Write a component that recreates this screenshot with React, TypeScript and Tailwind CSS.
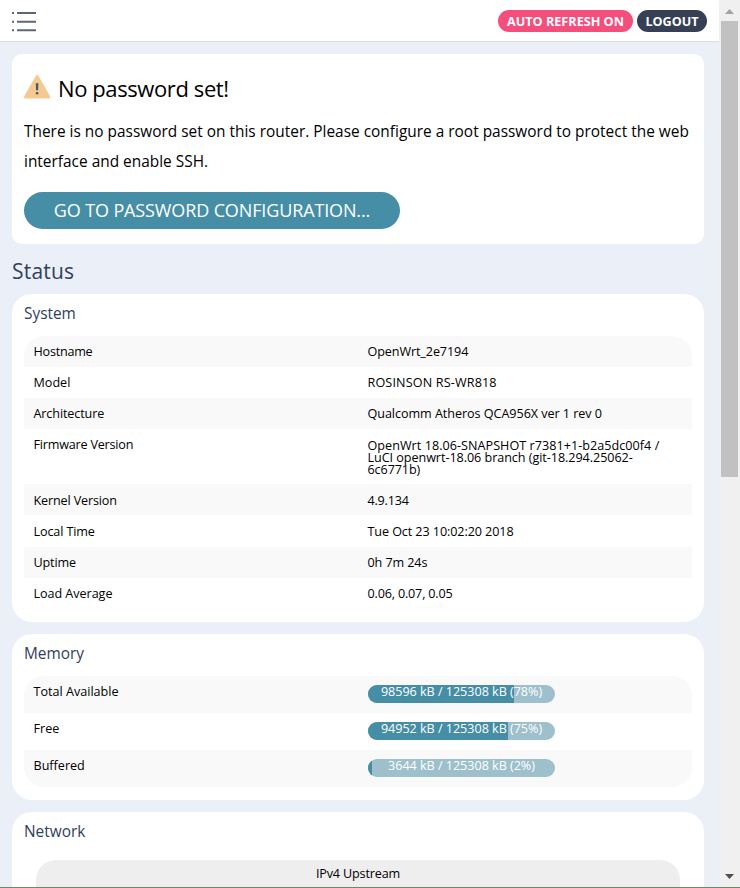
import type { ReactNode } from "react";

type Row = { label: string; value: ReactNode; height: string; labelClass: string; valueClass: string };

const systemRows: Row[] = [
  { label: "Hostname", value: "OpenWrt_2e7194", height: "h-[31px]", labelClass: "pt-[10px] tracking-[-0.23px]", valueClass: "pt-[10px] tracking-[-0.1px]" },
  { label: "Model", value: "ROSINSON RS-WR818", height: "h-[31px]", labelClass: "pt-[10px]", valueClass: "pt-[10px] tracking-[0.15px]" },
  { label: "Architecture", value: "Qualcomm Atheros QCA956X ver 1 rev 0", height: "h-[31px]", labelClass: "pt-[10px] tracking-[-0.12px]", valueClass: "pt-[10px] tracking-[-0.05px]" },
  {
    label: "Firmware Version",
    value: (
      <>
        <span className="tracking-[0.04px]">OpenWrt 18.06-SNAPSHOT r7381+1-b2a5dc00f4 /</span>
        <br />
        <span className="tracking-[-0.05px]">LuCI openwrt-18.06 branch (git-18.294.25062-</span>
        <br />
        <span className="tracking-[-0.1px]">6c6771b)</span>
      </>
    ),
    height: "h-[55px]",
    labelClass: "pt-[10px] tracking-[-0.2px]",
    valueClass: "pt-[11px]",
  },
  { label: "Kernel Version", value: "4.9.134", height: "h-[31px]", labelClass: "pt-[11px] tracking-[-0.15px]", valueClass: "pt-[11px] tracking-[-0.2px]" },
  { label: "Local Time", value: "Tue Oct 23 10:02:20 2018", height: "h-[32px]", labelClass: "pt-[11px] tracking-[-0.12px]", valueClass: "pt-[11px] tracking-[-0.09px]" },
  { label: "Uptime", value: "0h 7m 24s", height: "h-[31px]", labelClass: "pt-[10px] tracking-[-0.15px]", valueClass: "pt-[10px] tracking-[-0.1px]" },
  { label: "Load Average", value: "0.06, 0.07, 0.05", height: "h-[31px]", labelClass: "pt-[10px] tracking-[-0.05px]", valueClass: "pt-[10px] tracking-[-0.17px]" },
];

const memory = [
  { label: "Total Available", used: 98596, percent: 78 },
  { label: "Free", used: 94952, percent: 75 },
  { label: "Buffered", used: 3644, percent: 2 },
];
const totalMemory = 125308;

function Card({ title, height, children }: { title: string; height: string; children: ReactNode }) {
  return (
    <section className={`${height} shrink-0 rounded-[20px] bg-white px-3 pt-2`}>
      <h3 className="h-[34px] text-[15.4px] leading-6 text-[#32405d]">{title}</h3>
      {children}
    </section>
  );
}

function SystemTable() {
  return (
    <div className="overflow-hidden rounded-[20px]">
      {systemRows.map((row) => (
        <div key={row.label} className={`${row.height} grid grid-cols-2 text-[12.6px] leading-3 odd:bg-[#f9f9f9]`}>
          <div className={`${row.labelClass} pl-[9.5px]`}>{row.label}</div>
          <div className={`${row.valueClass} pl-[9.5px] whitespace-nowrap`}>{row.value}</div>
        </div>
      ))}
    </div>
  );
}

function MemoryTable() {
  return (
    <div className="overflow-hidden rounded-[20px]">
      {memory.map((row) => (
        <div key={row.label} className="grid h-[37px] grid-cols-2 text-[12.6px] leading-3 odd:bg-[#f9f9f9]">
          <div className="pt-[10px] pl-[9.5px]">{row.label}</div>
          <div className="pt-[9px] pl-[10px]">
            <div className="relative h-[18px] w-[187px]">
              <div className="h-full overflow-hidden rounded-[9px] bg-[#9dc0cc]">
                <div className="h-full bg-[#468ea5]" style={{ width: `${row.percent}%` }} />
              </div>
              <span className="absolute inset-x-0 top-[-2px] text-center leading-[18px] tracking-[-0.03px] whitespace-nowrap text-white">
                {`${row.used} kB / ${totalMemory} kB (${row.percent}%)`}
              </span>
            </div>
          </div>
        </div>
      ))}
    </div>
  );
}

function WarningIcon() {
  return (
    <svg width="27" height="26" viewBox="0 0 27 26" aria-hidden="true">
      <path d="M13.1 2.5 24.8 23H1.5Z" fill="#f5ca90" stroke="#f5ca90" strokeWidth="3" strokeLinejoin="round" />
      <path d="M11.8 9.2h2.6l-.3 7h-2Z" fill="#4b5568" />
      <circle cx="13.1" cy="19.3" r="1.3" fill="#4b5568" />
    </svg>
  );
}

function MenuIcon() {
  return (
    <svg width="24" height="22" viewBox="0 0 24 22" className="mt-[1px] text-[#5c657b]" fill="currentColor" aria-hidden="true">
      <path d="M0 1h2v2H0zM5 1h19v2H5zM0 9.8h2v2H0zM5 9.8h19v2H5zM0 18.3h2v2H0zM5 18.3h19v2H5z" />
    </svg>
  );
}

export default function App() {
  return (
    <div className="flex h-[888px] w-[740px] flex-col overflow-hidden bg-[#ebeff7] font-['Open_Sans','Noto_Sans',sans-serif] text-black">
      <div className="flex h-[887px] shrink-0 overflow-hidden">
        <div className="flex w-[719px] flex-col">
          <header className="flex h-[42px] shrink-0 items-start justify-between border-b border-[#d9dce1] bg-white px-3 pt-[10px]">
            <MenuIcon />
            <div className="flex gap-1 text-[12.6px] leading-[23px] font-bold text-white">
              <span className="h-[22px] w-[135px] rounded-full bg-[#f44e7d] text-center tracking-[0.02px] whitespace-nowrap">AUTO REFRESH ON</span>
              <span className="h-[22px] w-[70px] rounded-full bg-[#353f56] text-center">LOGOUT</span>
            </div>
          </header>
          <main className="flex flex-col pt-3 pr-[15px] pl-3">
            <section className="h-[190px] shrink-0 rounded-[10px] bg-white px-3 pt-5">
              <div className="flex h-[43px] items-start gap-[7px]">
                <WarningIcon />
                <h4 className="-mt-px text-[22px] leading-[30px] tracking-[-0.4px]">No password set!</h4>
              </div>
              <p className="h-[75px] text-[15.4px] leading-[30px] tracking-[0.015px] whitespace-nowrap">
                There is no password set on this router. Please configure a root password to protect the web
                <br />
                interface and enable SSH.
              </p>
              <button className="block h-[37px] w-[376px] rounded-[20px] bg-[#468ea5] text-center text-[18px] leading-[37px] tracking-[-0.13px] whitespace-nowrap text-white">
                GO TO PASSWORD CONFIGURATION...
              </button>
            </section>
            <h2 className="h-[50px] shrink-0 pt-[11px] text-[21px] leading-8 tracking-[0.2px] text-[#32405d]">Status</h2>
            <div className="flex flex-col gap-3">
              <Card title="System" height="h-[328px]"><SystemTable /></Card>
              <Card title="Memory" height="h-[166px]"><MemoryTable /></Card>
              <Card title="Network" height="h-[200px]">
                <div className="mx-3 mt-[6px] h-20 rounded-t-[20px] bg-[#eeeeee] pt-2 text-center text-[12.6px] leading-3 tracking-[-0.15px]">
                  IPv4 Upstream
                </div>
              </Card>
            </div>
          </main>
        </div>
        <div className="flex w-[21px] flex-col items-center justify-between bg-[#f0f0f0]">
          <div className="flex h-[477px] flex-col items-center">
            <svg width="11" height="21" viewBox="0 0 11 21" className="shrink-0" aria-hidden="true">
              <path d="M1 14 5.5 9l4.5 5Z" fill="#a3a3a3" />
            </svg>
            <div className="w-[17px] grow bg-[#c1c1c1]" />
          </div>
          <svg width="11" height="17" viewBox="0 0 11 17" aria-hidden="true">
            <path d="M1 4h9L5.5 9Z" fill="#505050" />
          </svg>
        </div>
      </div>
      <div className="h-px shrink-0 bg-[#6b8a60]" />
    </div>
  );
}
